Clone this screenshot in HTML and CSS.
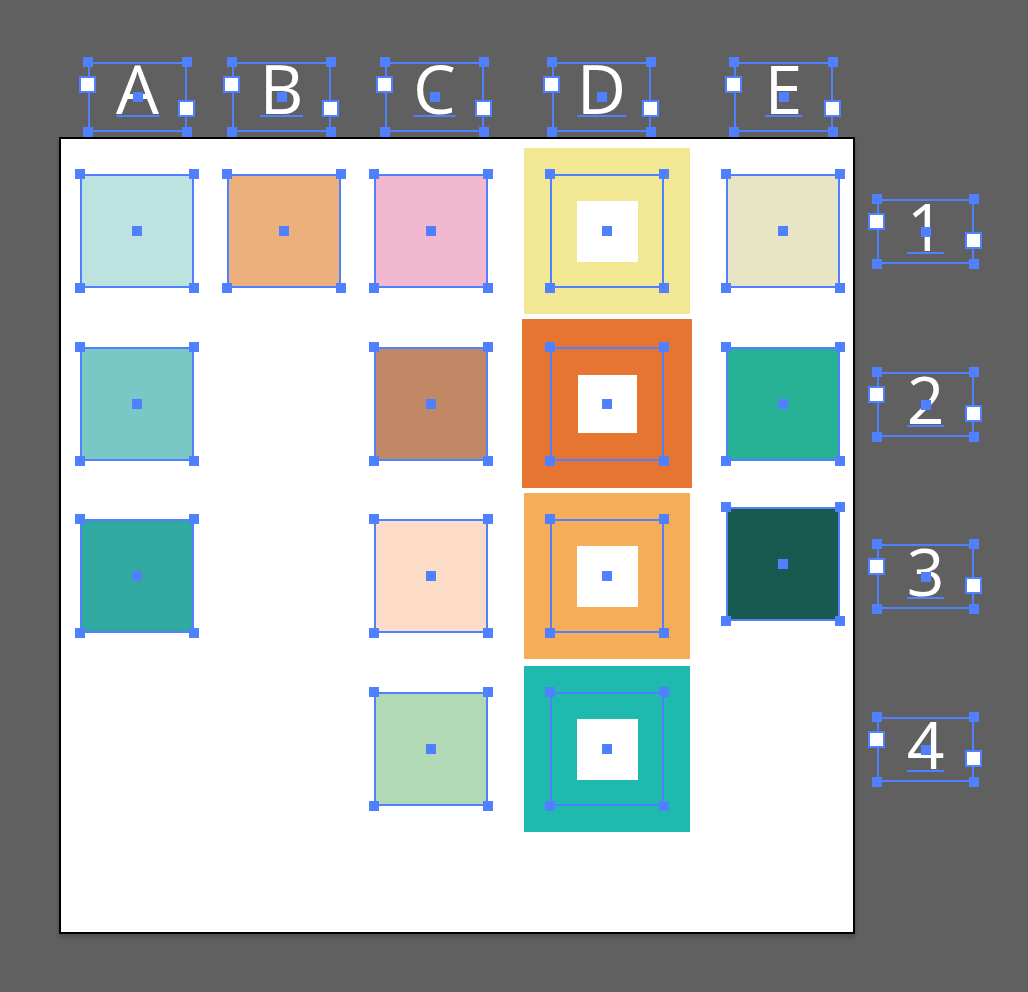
FILE: index.html
```html
<!DOCTYPE html>
<html lang="en">

<head>
  <meta charset="UTF-8">
  <title>Artboard</title>
  <link rel="stylesheet" href="styles.css">
</head>

<body>
  <div class="stage">
    <div class="artboard"></div>

    <!-- column labels -->
    <div class="frame letter col-la"><span class="port in"></span><span class="port out"></span><span class="glyph">A</span></div>
    <div class="frame letter col-lb"><span class="port in"></span><span class="port out"></span><span class="glyph">B</span></div>
    <div class="frame letter col-lc"><span class="port in"></span><span class="port out"></span><span class="glyph">C</span></div>
    <div class="frame letter col-ld"><span class="port in"></span><span class="port out"></span><span class="glyph">D</span></div>
    <div class="frame letter col-le"><span class="port in"></span><span class="port out"></span><span class="glyph">E</span></div>

    <!-- row labels -->
    <div class="frame number row-l1"><span class="port in"></span><span class="port out"></span><span class="glyph">1</span></div>
    <div class="frame number row-l2"><span class="port in"></span><span class="port out"></span><span class="glyph">2</span></div>
    <div class="frame number row-l3"><span class="port in"></span><span class="port out"></span><span class="glyph">3</span></div>
    <div class="frame number row-l4"><span class="port in"></span><span class="port out"></span><span class="glyph">4</span></div>

    <!-- column A -->
    <div class="sel col-a row-1 fill-a1"></div>
    <div class="sel col-a row-2 fill-a2"></div>
    <div class="sel col-a row-3 fill-a3"></div>

    <!-- column B -->
    <div class="sel col-b row-1 fill-b1"></div>

    <!-- column C -->
    <div class="sel col-c row-1 fill-c1"></div>
    <div class="sel col-c row-2 fill-c2"></div>
    <div class="sel col-c row-3 fill-c3"></div>
    <div class="sel col-c row-4 fill-c4"></div>

    <!-- column D: framed tiles -->
    <div class="tile d1"><span class="hole"></span></div>
    <div class="tile d2"><span class="hole"></span></div>
    <div class="tile d3"><span class="hole"></span></div>
    <div class="tile d4"><span class="hole"></span></div>
    <div class="sel col-d row-1"></div>
    <div class="sel col-d row-2"></div>
    <div class="sel col-d row-3"></div>
    <div class="sel col-d row-4"></div>

    <!-- column E -->
    <div class="sel col-e row-1 fill-e1"></div>
    <div class="sel col-e row-2 fill-e2"></div>
    <div class="sel col-e row-3b fill-e3"></div>
  </div>
</body>

</html>
```

FILE: styles.css
```css
body {
  margin: 0;
  padding: 0;
  background-color: #606060;
  font-family: 'Open Sans', 'Noto Sans', sans-serif;
}

.stage {
  position: relative;
  width: 1028px;
  height: 992px;
  overflow: hidden;
}

.artboard {
  position: absolute;
  left: 59px;
  top: 137px;
  width: 796px;
  height: 797px;
  box-sizing: border-box;
  background: #fff;
  border: 2px solid #000;
  box-shadow: 0 4px 4px rgba(0, 0, 0, 0.18);
}

/* selection box with corner + center handles */
.sel,
.frame {
  position: absolute;
  box-sizing: border-box;
  border: 2px solid #4e80ff;
}

.sel {
  width: 114px;
  height: 114px;
}

.sel::before,
.frame::before {
  content: '';
  position: absolute;
  inset: -7px;
  z-index: 2;
  background:
    linear-gradient(#4e80ff, #4e80ff) 0 0 / 10px 10px no-repeat,
    linear-gradient(#4e80ff, #4e80ff) 100% 0 / 10px 10px no-repeat,
    linear-gradient(#4e80ff, #4e80ff) 0 100% / 10px 10px no-repeat,
    linear-gradient(#4e80ff, #4e80ff) 100% 100% / 10px 10px no-repeat,
    linear-gradient(#4e80ff, #4e80ff) 50% 50% / 10px 10px no-repeat;
}

.col-a { left: 80px; }
.col-b { left: 227px; }
.col-c { left: 374px; }
.col-d { left: 550px; }
.col-e { left: 726px; }

.row-1 { top: 174px; }
.row-2 { top: 347px; }
.row-3 { top: 519px; }
.row-3b { top: 507px; }
.row-4 { top: 692px; }

.fill-a1 { background: #bce3e0; }
.fill-a2 { background: #7ac8c5; }
.fill-a3 { background: #30aaa0; }
.fill-b1 { background: #ecb07c; }
.fill-c1 { background: #f2b8d0; }
.fill-c2 { background: #c08865; }
.fill-c3 { background: #fcdcc6; }
.fill-c4 { background: #b2d9b6; }
.fill-e1 { background: #e8e4c6; }
.fill-e2 { background: #27b296; }
.fill-e3 { background: #185a4f; }

/* column D tiles */
.tile {
  position: absolute;
  display: flex;
  align-items: center;
  justify-content: center;
}

.hole {
  width: 61px;
  height: 61px;
  background: #fff;
}

.d1 { left: 524px; top: 148px; width: 166px; height: 166px; background: #f2e792; }
.d2 { left: 522px; top: 319px; width: 170px; height: 169px; background: #e67532; }
.d2 .hole { width: 59px; height: 58px; }
.d3 { left: 524px; top: 493px; width: 166px; height: 166px; background: #f6ad58; }
.d4 { left: 524px; top: 666px; width: 166px; height: 166px; background: #1fbaae; }

/* text frames */
.letter {
  top: 62px;
  width: 99px;
  height: 70px;
  font-size: 68px;
}

.number {
  left: 877px;
  width: 97px;
  height: 65px;
  font-size: 66px;
}

.col-la { left: 88px; }
.col-lb { left: 232px; }
.col-lc { left: 385px; }
.col-ld { left: 552px; }
.col-le { left: 734px; }

.row-l1 { top: 199px; }
.row-l2 { top: 372px; }
.row-l3 { top: 544px; }
.row-l4 { top: 717px; }

.glyph {
  position: absolute;
  left: 50%;
  top: calc(50px - 0.888em);
  transform: translateX(-50%);
  line-height: 1;
  color: #fff;
}

.glyph::after {
  content: '';
  position: absolute;
  left: 0;
  right: 0;
  top: calc(0.888em + 1px);
  height: 2px;
  background: #4e80ff;
}

.port {
  position: absolute;
  z-index: 3;
  width: 17px;
  height: 17px;
  box-sizing: border-box;
  background: #fff;
  border: 2px solid #4e80ff;
}

.port.in {
  left: -11px;
  top: 12px;
}

.port.out {
  right: -10px;
  bottom: 13px;
}
```
